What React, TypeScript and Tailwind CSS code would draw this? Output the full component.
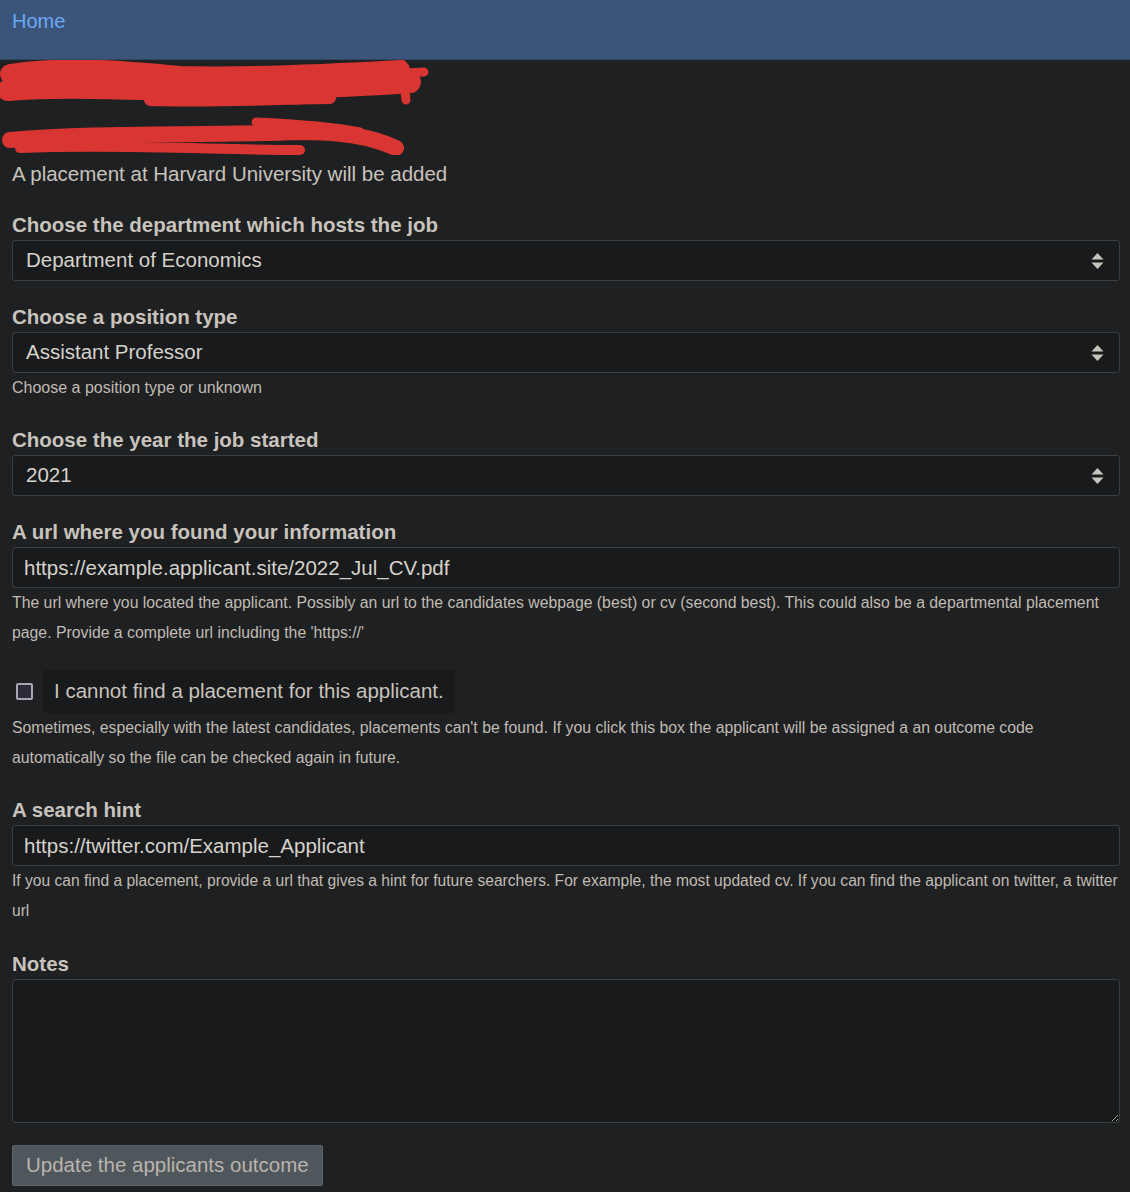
import React from 'react';

const font = { fontFamily: '"Liberation Sans", Arial, sans-serif' };

function Chevrons() {
  return (
    <svg width="13" height="18" viewBox="0 0 13 18" className="absolute right-[15px] top-1/2 -translate-y-1/2">
      <path d="M6.5 1 L12.5 7.5 H0.5 Z" fill="#c8c3bc" />
      <path d="M6.5 17 L12.5 10.5 H0.5 Z" fill="#c8c3bc" />
    </svg>
  );
}

function SelectBox({ value }: { value: string }) {
  return (
    <div className="relative flex h-[41px] items-center rounded-[3px] border border-[#3a3e41] bg-[#181a1b] pl-[13px] text-[20.5px] text-[#d6d2cc]">
      <span>{value}</span>
      <Chevrons />
    </div>
  );
}

function TextBox({ value }: { value: string }) {
  return (
    <input
      readOnly
      value={value}
      className="block h-[41px] w-full rounded-[3px] border border-[#3a3e41] bg-[#181a1b] px-[11px] text-[20.5px] text-[#d6d2cc] outline-none"
      style={font}
    />
  );
}

function Label({ children }: { children: React.ReactNode }) {
  return <div className="mb-[2px] text-[20.5px] font-bold leading-[26px] text-[#c8c3bc]">{children}</div>;
}

function Help({ children, small }: { children: React.ReactNode; small?: boolean }) {
  return (
    <p className={small ? 'text-[15.6px] leading-[30px] text-[#c0bbb3]' : 'text-[15.8px] leading-[30px] text-[#c0bbb3]'}>
      {children}
    </p>
  );
}

export default function App() {
  return (
    <div className="min-h-[1192px] bg-[#1e2022]" style={font}>
      <nav className="h-[60px] border-b border-[#31465f] bg-[#3b5479] px-3 pt-[6px]">
        <a className="text-[20px] text-[#6aa9f4]">Home</a>
      </nav>

      <main className="pl-3 pr-[10px]">
        {/* redacted name */}
        <svg width="430" height="95" viewBox="0 0 430 95" className="-ml-3 block">
          <g stroke="#d93532" strokeLinecap="round" strokeLinejoin="round" fill="none">
            <path d="M10 14 C60 6 120 10 180 16 C250 18 330 14 400 10" strokeWidth="20" />
            <path d="M8 30 C80 24 160 32 240 30 C300 28 360 26 410 22" strokeWidth="22" />
            <path d="M150 40 C220 42 300 38 330 38" strokeWidth="12" />
            <path d="M402 4 L406 40" strokeWidth="9" />
            <path d="M388 14 L424 12" strokeWidth="9" />
            <path d="M10 80 C100 72 200 76 300 72 C340 72 370 76 396 88" strokeWidth="16" />
            <path d="M20 88 C120 84 220 90 300 90" strokeWidth="10" />
            <path d="M256 62 C300 64 340 68 360 72" strokeWidth="9" />
          </g>
        </svg>

        <p className="mt-[7px] text-[20.5px] leading-[24px] text-[#c8c3bc]">A placement at Harvard University will be added</p>

        <div className="mt-[26px]">
          <Label>Choose the department which hosts the job</Label>
          <SelectBox value="Department of Economics" />
        </div>

        <div className="mt-[23px]">
          <Label>Choose a position type</Label>
          <SelectBox value="Assistant Professor" />
          <p className="mt-[2px] text-[16px] leading-[26px] text-[#c0bbb3]">Choose a position type or unknown</p>
        </div>

        <div className="mt-[26px]">
          <Label>Choose the year the job started</Label>
          <SelectBox value="2021" />
        </div>

        <div className="mt-[23px]">
          <Label>A url where you found your information</Label>
          <TextBox value="https://example.applicant.site/2022_Jul_CV.pdf" />
          <Help>
            The url where you located the applicant. Possibly an url to the candidates webpage (best) or cv (second best). This could also be a departmental placement page. Provide a complete url including the 'https://'
          </Help>
        </div>

        <div className="mt-[22px] flex items-center">
          <span className="ml-[4px] h-[17px] w-[17px] rounded-[2px] border-2 border-[#a9a6b3] bg-[#2a2a3a]" />
          <span className="ml-[10px] flex h-[43px] items-center bg-[#181a1b] px-[11px] text-[20.5px] text-[#c8c3bc]">
            I cannot find a placement for this applicant.
          </span>
        </div>
        <Help>
          Sometimes, especially with the latest candidates, placements can't be found. If you click this box the applicant will be assigned a an outcome code automatically so the file can be checked again in future.
        </Help>

        <div className="mt-[24px]">
          <Label>A search hint</Label>
          <TextBox value="https://twitter.com/Example_Applicant" />
          <Help small>
            If you can find a placement, provide a url that gives a hint for future searchers. For example, the most updated cv. If you can find the applicant on twitter, a twitter url
          </Help>
        </div>

        <div className="mt-[25px]">
          <Label>Notes</Label>
          <textarea
            readOnly
            className="block h-[144px] w-full rounded-[3px] border border-[#3a3e41] bg-[#181a1b] text-[#d6d2cc] outline-none"
          />
        </div>

        <button className="mt-[22px] h-[41px] rounded-[2px] border border-[#5c6469] bg-[#4f575c] px-[13px] text-[20.5px] text-[#b9b4ac]">
          Update the applicants outcome
        </button>
      </main>
    </div>
  );
}
